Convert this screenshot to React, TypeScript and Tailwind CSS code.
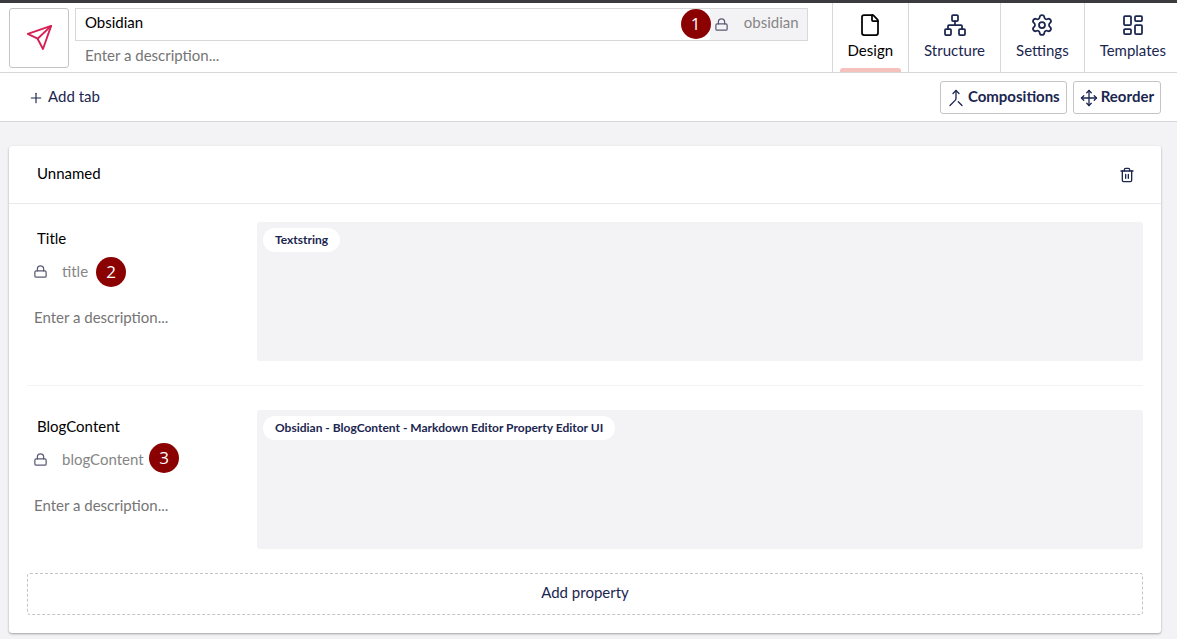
import type { ReactNode } from "react";
import { File, LayoutDashboard, Merge, Move, Network, Plus, Settings } from "lucide-react";

function LockIcon() {
  return (
    <svg viewBox="0 0 24 24" className="size-[15px] shrink-0" fill="none" stroke="#5b5b75" strokeWidth="2" strokeLinecap="round" strokeLinejoin="round" aria-hidden="true">
      <rect x="3" y="11" width="18" height="10" rx="2" />
      <path d="M7 11V8a5 5 0 0 1 10 0v3" />
    </svg>
  );
}

function PlaneIcon() {
  return (
    <svg viewBox="0 0 24 24" className="size-[28px]" fill="none" stroke="#d42054" strokeWidth="1.6" strokeLinecap="round" strokeLinejoin="round" aria-hidden="true">
      <path d="M22.4 1.6 2.4 8.4l8.4 4.2 4.6 8.8Z" />
      <path d="M22.4 1.6 10.8 12.6" />
    </svg>
  );
}

function TrashIcon() {
  return (
    <svg viewBox="0 0 24 24" className="size-4" fill="none" stroke="currentColor" strokeWidth="2" strokeLinecap="round" strokeLinejoin="round" aria-hidden="true">
      <path d="M3 6h18" />
      <path d="M19 6v14c0 1-1 2-2 2H7c-1 0-2-1-2-2V6" />
      <path d="M8 6V4c0-1 1-2 2-2h4c1 0 2 1 2 2v2" />
      <path d="M10 11v6M14 11v6" />
    </svg>
  );
}

function Badge({ children, place }: { children: ReactNode; place: string }) {
  return (
    <span className={`absolute flex size-[30px] items-center justify-center rounded-full bg-[#8b0000] pb-0.5 font-['Open_Sans',sans-serif] text-[17px] leading-none text-white ${place}`}>
      {children}
    </span>
  );
}

const tabs = [
  { label: "Design", Icon: File, active: true },
  { label: "Structure", Icon: Network, active: false },
  { label: "Settings", Icon: Settings, active: false },
  { label: "Templates", Icon: LayoutDashboard, active: false },
];

function Header() {
  return (
    <header className="flex border-b border-[#d8d7d9] bg-white">
      <div className="flex min-w-0 flex-1 gap-1.5 pt-[5px] pr-6 pb-[3px] pl-[9px]">
        <button type="button" aria-label="Choose icon" className="flex size-[60px] shrink-0 items-center justify-center rounded-[3px] border border-[#c4c4c4]">
          <PlaneIcon />
        </button>
        <div className="min-w-0 flex-1">
          <div className="relative flex h-[33px] border border-[#d8d7d9]">
            <input aria-label="Name" defaultValue="Obsidian" className="min-w-0 flex-1 px-[9px] pb-1.5 text-black outline-none" />
            <div className="flex w-[97px] items-center bg-[#f3f3f5] pl-1">
              <LockIcon />
              <input aria-label="Alias" defaultValue="obsidian" readOnly className="h-full min-w-0 flex-1 pr-2 pb-1.5 text-right text-[#868686] outline-none" />
            </div>
            <Badge place="right-24 top-0">1</Badge>
          </div>
          <input aria-label="Description" placeholder="Enter a description..." className="h-7 w-full px-[10px] outline-none placeholder:text-[#757575]" />
        </div>
      </div>
      <nav className="flex">
        {tabs.map(({ label, Icon, active }) => (
          <a
            key={label}
            href="#"
            aria-current={active ? "page" : undefined}
            className={`relative flex flex-col items-center gap-[3px] border-l border-[#d8d7d9] px-[15px] pt-[10px] last:pr-[11px] ${active ? "text-black" : "text-[#1b264f]"}`}
          >
            <Icon className="size-6" strokeWidth={1.75} aria-hidden="true" />
            <span className="leading-5">{label}</span>
            {active && <span className="absolute inset-x-[7px] bottom-0 h-1 rounded-t-[3px] bg-[#f5c1bc]" />}
          </a>
        ))}
      </nav>
    </header>
  );
}

function Toolbar() {
  const button = "flex h-[33px] items-center gap-[3px] rounded-[3px] border border-[#c4c4c4] px-1.5 font-bold";
  return (
    <div className="flex items-center justify-between border-b border-[#d8d7d9] bg-white pt-2 pr-4 pb-[7px] pl-7">
      <button type="button" className="flex h-[33px] items-center gap-1">
        <Plus className="size-4" strokeWidth={1.75} aria-hidden="true" />
        <span className="pb-1">Add tab</span>
      </button>
      <div className="flex gap-1.5">
        <button type="button" className={button}>
          <Merge className="size-[18px]" strokeWidth={1.75} aria-hidden="true" />
          <span className="pb-1">Compositions</span>
        </button>
        <button type="button" className={button}>
          <Move className="size-[18px]" strokeWidth={1.75} aria-hidden="true" />
          <span className="pb-1">Reorder</span>
        </button>
      </div>
    </div>
  );
}

type Property = { name: string; alias: string; editor: string; step: string; place: string };

const properties: Property[] = [
  { name: "Title", alias: "title", editor: "Textstring", step: "2", place: "left-[69px] top-0.5" },
  { name: "BlogContent", alias: "blogContent", editor: "Obsidian - BlogContent - Markdown Editor Property Editor UI", step: "3", place: "left-[122px] top-0" },
];

function PropertyRow({ name, alias, editor, step, place }: Property) {
  return (
    <section className="flex border-t border-[#f3f3f5] py-6 first:border-t-0 first:pt-0">
      <div className="w-[230px] shrink-0 pr-6">
        <input aria-label="Property name" defaultValue={name} className="h-[33px] w-full px-[10px] pb-0.5 text-black outline-none" />
        <div className="relative flex h-[33px] items-center pl-1.5">
          <LockIcon />
          <input aria-label="Property alias" defaultValue={alias} readOnly className="h-full min-w-0 flex-1 pb-0.5 pl-[14px] text-[#868686] outline-none" />
          <Badge place={place}>{step}</Badge>
        </div>
        <textarea aria-label="Property description" placeholder="Enter a description..." rows={1} className="mt-[19px] block w-full resize-none px-[7px] leading-5 outline-none placeholder:text-[#757575]" />
      </div>
      <button type="button" className="flex h-[139px] flex-1 items-start rounded-[3px] bg-[#f3f3f5] p-1.5">
        <span className="rounded-full bg-white px-3 text-xs leading-6 font-bold">{editor}</span>
      </button>
    </section>
  );
}

export default function App() {
  return (
    <div className="min-h-screen border-t-[3px] border-[#3b3a3c] bg-[#f3f3f5] font-[Lato,sans-serif] text-[15px] leading-5 text-[#1b264f]">
      <Header />
      <Toolbar />
      <main className="pt-6 pr-4 pb-1.5 pl-[9px]">
        <div className="rounded-[3px] bg-white shadow-[0_1px_3px_rgba(0,0,0,0.12),0_1px_2px_rgba(0,0,0,0.24)]">
          <div className="flex h-[58px] items-center justify-between border-b border-[#e9e9eb] pr-[26px] pl-[18px]">
            <input aria-label="Group name" defaultValue="Unnamed" className="h-[33px] w-64 px-[10px] pb-1 text-black outline-none" />
            <button type="button" aria-label="Delete group">
              <TrashIcon />
            </button>
          </div>
          <div className="p-[18px]">
            <div>
              {properties.map((property) => (
                <PropertyRow key={property.alias} {...property} />
              ))}
            </div>
            <button type="button" className="h-[42px] w-full rounded-[3px] border border-dashed border-[#c4c4c4] pb-1">
              Add property
            </button>
          </div>
        </div>
      </main>
    </div>
  );
}
